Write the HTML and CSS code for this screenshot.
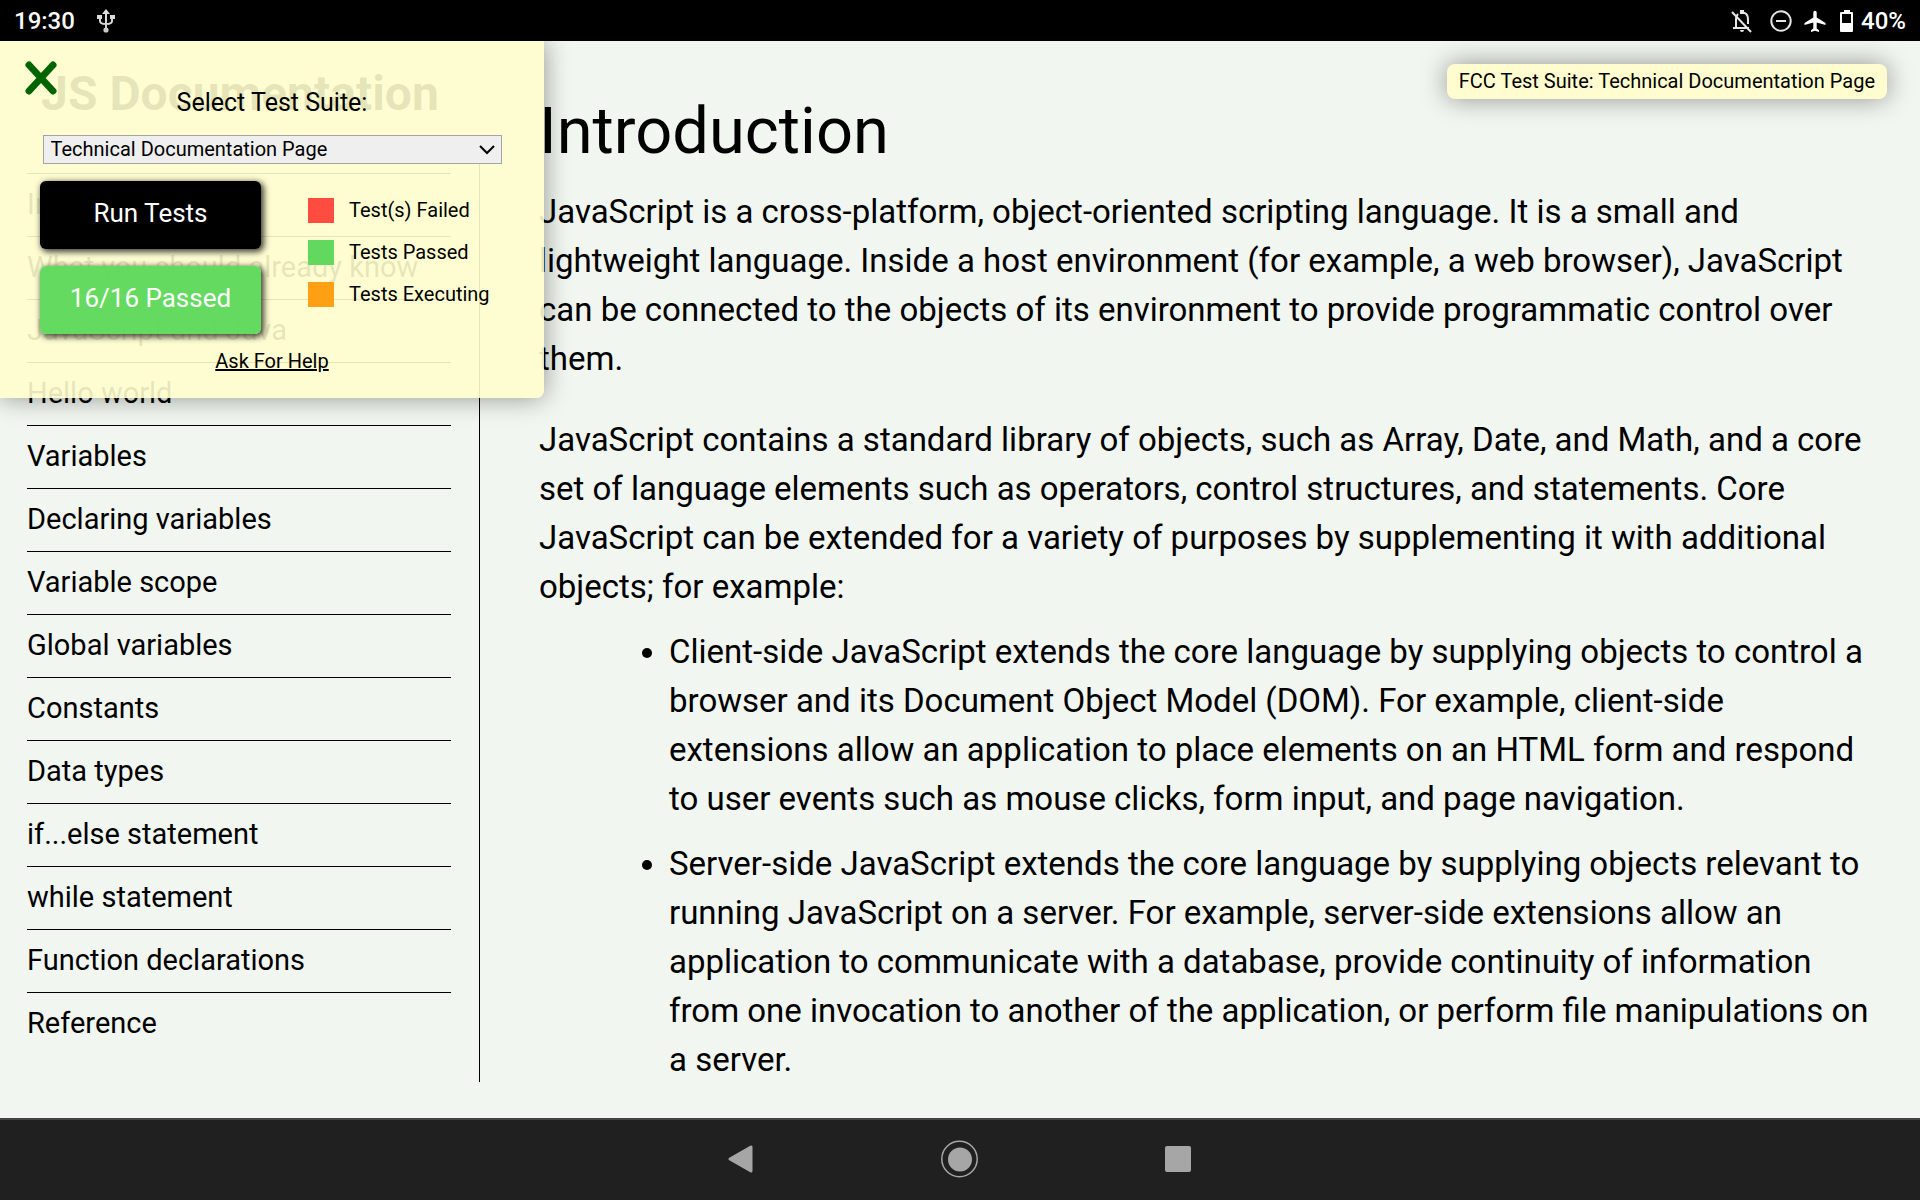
FILE: index.html
```html
<!DOCTYPE html>
<html lang="en">
<head>
<meta charset="utf-8">
<title>JS Documentation</title>
<link rel="stylesheet" href="styles.css">
</head>
<body>
<header class="status-bar">
  <div class="status-group status-left">
    <span>19:30</span>
    <svg width="18" height="24" viewBox="0 0 18 24" fill="none" stroke="#ddd" stroke-width="2" aria-hidden="true">
      <path d="M9 4v17M3 8v4q0 3 6 3q6 0 6-3V8"/>
      <path d="M9 0l4 5H5zM0 6h5v4H0zM13 6h5v4h-5z" fill="#ddd" stroke="none"/>
      <circle cx="9" cy="21" r="2.6" fill="#ddd" stroke="none"/>
    </svg>
  </div>
  <div class="status-group status-right">
    <svg width="22" height="24" viewBox="0 0 22 24" fill="none" stroke="#e6e6e6" stroke-width="2" aria-hidden="true">
      <path d="M5 18V10q0-3 2-5M9 4q8-2 8 7v4M2 19h16"/>
      <path d="M9 1h4v4H9zM9 21h4q0 2-2 2t-2-2z" fill="#e6e6e6" stroke="none"/>
      <path d="M1 3l19 20"/>
    </svg>
    <svg class="icon-dnd" width="22" height="24" viewBox="0 0 22 24" fill="none" stroke="#e6e6e6" stroke-width="2" aria-hidden="true">
      <circle cx="11" cy="12" r="9.7"/><path d="M6 12h10"/>
    </svg>
    <svg width="22" height="24" viewBox="0 0 22 24" fill="#fff" aria-hidden="true">
      <path d="M21.500 16v-2l-8.800-5.500V3.500a1.700 1.700 0 0 0-3.400 0v5L.5 14v2l8.800-2.500V19.500L7 21.200V23l4-1.200 4 1.200v-1.800l-2.300-1.700v-6z"/>
    </svg>
    <svg class="icon-battery" width="14" height="24" viewBox="0 0 14 24" aria-hidden="true">
      <path fill="#fff" fill-rule="evenodd" d="M4 1h6v2h2q1 0 1 1v18q0 1-1 1H1q-1 0-1-1V4q0-1 1-1h3zM2 5v9h9V5z"/>
    </svg>
    <span>40%</span>
  </div>
</header>

<main class="page">
  <nav class="sidebar">
    <h1 class="sidebar-title">JS Documentation</h1>
    <ul class="nav-list">
      <li><a href="#introduction">Introduction</a></li>
      <li><a href="#know">What you should already know</a></li>
      <li><a href="#java">JavaScript and Java</a></li>
      <li><a href="#hello">Hello world</a></li>
      <li><a href="#variables">Variables</a></li>
      <li><a href="#declaring">Declaring variables</a></li>
      <li><a href="#scope">Variable scope</a></li>
      <li><a href="#global">Global variables</a></li>
      <li><a href="#constants">Constants</a></li>
      <li><a href="#types">Data types</a></li>
      <li><a href="#ifelse">if...else statement</a></li>
      <li><a href="#while">while statement</a></li>
      <li><a href="#functions">Function declarations</a></li>
      <li><a href="#reference">Reference</a></li>
    </ul>
  </nav>

  <article class="content" id="introduction">
    <h2>Introduction</h2>
    <p>JavaScript is a cross-platform, object-oriented scripting language. It is a small and lightweight language. Inside a host environment (for example, a web browser), JavaScript can be connected to the objects of its environment to provide programmatic control over them.</p>
    <p>JavaScript contains a standard library of objects, such as Array, Date, and Math, and a core set of language elements such as operators, control structures, and statements. Core JavaScript can be extended for a variety of purposes by supplementing it with additional objects; for example:</p>
    <ul>
      <li>Client-side JavaScript extends the core language by supplying objects to control a browser and its Document Object Model (DOM). For example, client-side extensions allow an application to place elements on an HTML form and respond to user events such as mouse clicks, form input, and page navigation.</li>
      <li>Server-side JavaScript extends the core language by supplying objects relevant to running JavaScript on a server. For example, server-side extensions allow an application to communicate with a database, provide continuity of information from one invocation to another of the application, or perform file manipulations on a server.</li>
    </ul>
  </article>

  <aside class="test-panel">
    <button class="close" type="button" aria-label="Close test panel">
      <svg width="32" height="34" viewBox="0 0 32 34" fill="none" stroke="#006400" stroke-width="7" stroke-linecap="round" aria-hidden="true"><path d="M4 4l24 26M28 4L4 30"/></svg>
    </button>
    <label class="suite-label" for="suite">Select Test Suite:</label>
    <div class="suite-select">
      <select id="suite"><option>Technical Documentation Page</option></select>
      <svg width="16" height="10" viewBox="0 0 16 10" fill="none" stroke="#000" stroke-width="2" aria-hidden="true"><path d="M1 1l7 7 7-7"/></svg>
    </div>
    <div class="panel-body">
      <div class="panel-buttons">
        <button class="run" type="button">Run Tests</button>
        <button class="passed" type="button">16/16 Passed</button>
      </div>
      <ul class="legend">
        <li><span class="swatch failed"></span>Test(s) Failed</li>
        <li><span class="swatch ok"></span>Tests Passed</li>
        <li><span class="swatch executing"></span>Tests Executing</li>
      </ul>
    </div>
    <a class="help" href="#help">Ask For Help</a>
  </aside>
  <div class="suite-tag">FCC Test Suite: Technical Documentation Page</div>
</main>

<footer class="system-nav">
  <button type="button" aria-label="Back"><svg width="38" height="38" viewBox="0 0 38 38" aria-hidden="true"><path d="M7 19L28 7v24z" fill="#a6a6a6" stroke="#a6a6a6" stroke-width="3" stroke-linejoin="round"/></svg></button>
  <button type="button" aria-label="Home"><svg width="38" height="38" viewBox="0 0 38 38" aria-hidden="true"><circle cx="18.500" cy="19" r="17.700" fill="none" stroke="#a6a6a6" stroke-width="1.500"/><circle cx="19" cy="19.500" r="12" fill="#a6a6a6"/></svg></button>
  <button type="button" aria-label="Recent apps"><svg width="38" height="38" viewBox="0 0 38 38" aria-hidden="true"><rect x="6" y="6" width="26" height="26" rx="2" fill="#a6a6a6"/></svg></button>
</footer>
</body>
</html>
```
FILE: styles.css
```css
* { box-sizing: border-box; }

body {
  margin: 0;
  min-height: 100vh;
  display: flex;
  flex-direction: column;
  background: #f1f6f0;
  color: #000;
  font-family: Roboto, "Liberation Sans", sans-serif;
}

button, select { font-family: inherit; }

/* Status bar */
.status-bar {
  display: flex;
  justify-content: space-between;
  align-items: center;
  height: 41px;
  padding: 0 14px;
  background: #000;
  color: #fff;
  font-size: 24px;
  font-weight: 500;
  line-height: 42px;
}
.status-group { display: flex; align-items: center; }
.status-left { gap: 22px; }
.status-right { gap: 14px; }
.icon-dnd { margin: 0 -2px 0 3px; }
.status-right span { margin-left: -7px; }

/* Page */
.page {
  position: relative;
  flex: 1;
  display: grid;
  grid-template-columns: 25% 1fr;
}
.sidebar {
  display: flex;
  flex-direction: column;
  padding: 24px 0 36px;
}
.sidebar-title {
  margin: 0 0 28px;
  text-align: center;
  font-size: 48px;
  line-height: 57px;
}
.nav-list {
  flex: 1;
  margin: 0;
  padding: 23px 28px 0 27px;
  border-right: 1px solid #000;
  list-style: none;
}
.nav-list li { border-top: 1px solid #000; }
.nav-list a {
  display: block;
  padding-bottom: 2px;
  color: #000;
  font-size: 29px;
  line-height: 60px;
  text-decoration: none;
}

.content { padding: 52px 46px 32px 59px; }
.content h2 {
  margin: 0 0 18px;
  font-size: 65px;
  font-weight: 400;
  line-height: 76px;
}
.content p, .content li { font-size: 33px; line-height: 49px; }
.content p { margin: 0 0 32px; }
.content ul { margin: -16px 0 0; padding-left: 130px; }
.content li + li { margin-top: 16px; }

/* Test panel */
.test-panel {
  position: absolute;
  top: 0;
  left: 0;
  display: flex;
  flex-direction: column;
  align-items: center;
  width: 544px;
  padding: 45px 40px 24px;
  border-radius: 0 0 8px 0;
  background: rgba(255, 254, 206, 0.9);
  box-shadow: 0 0 26px rgba(0, 0, 0, 0.4);
}
.close {
  position: absolute;
  top: 20px;
  left: 25px;
  display: flex;
  padding: 0;
  border: 0;
  background: none;
}
.suite-label { font-size: 25px; line-height: 34px; }
.suite-select {
  display: grid;
  align-items: center;
  width: 459px;
  margin-top: 15px;
}
.suite-select > * { grid-area: 1 / 1; }
.suite-select svg { justify-self: end; margin-right: 7px; }
.suite-select select {
  appearance: none;
  width: 100%;
  height: 29px;
  padding: 0 7px;
  border: 1px solid #a4a4a4;
  border-radius: 0;
  background: #efefef;
  color: #000;
  font-size: 20px;
  line-height: 27px;
}
.panel-body {
  display: flex;
  gap: 47px;
  width: 100%;
  margin-top: 17px;
}
.panel-buttons { display: grid; gap: 17px; }
.panel-buttons button {
  width: 221px;
  height: 68px;
  padding: 0 0 4px;
  border: 0;
  border-radius: 6px;
  box-shadow: 2px 2px 6px 1px rgba(0, 0, 0, 0.75);
  color: #fff;
  font-size: 26px;
}
.run { background: #000; }
.passed { background: rgba(94, 216, 92, 0.96); }
.legend {
  display: grid;
  align-content: start;
  gap: 17px;
  margin: 0;
  padding: 17px 0 0;
  list-style: none;
  font-size: 20px;
  line-height: 25px;
  white-space: nowrap;
}
.legend li { display: flex; gap: 15px; }
.swatch { width: 26px; height: 25px; }
.failed { background: #ff4c40; }
.ok { background: #62d85e; }
.executing { background: #ff9f14; }
.help {
  margin-top: 15px;
  color: #000;
  font-size: 20px;
  line-height: 25px;
}

.suite-tag {
  position: absolute;
  top: 23px;
  right: 33px;
  padding: 0 12px;
  border-radius: 8px;
  background: #fffdd0;
  box-shadow: 0 0 26px rgba(0, 0, 0, 0.4);
  font-size: 20px;
  line-height: 35px;
}

/* System navigation */
.system-nav {
  display: flex;
  justify-content: center;
  align-items: center;
  gap: 180px;
  height: 82px;
  padding-bottom: 2px;
  border-top: 2px solid #444644;
  background: #202020;
}
.system-nav button {
  display: flex;
  padding: 0;
  border: 0;
  background: none;
}
```
